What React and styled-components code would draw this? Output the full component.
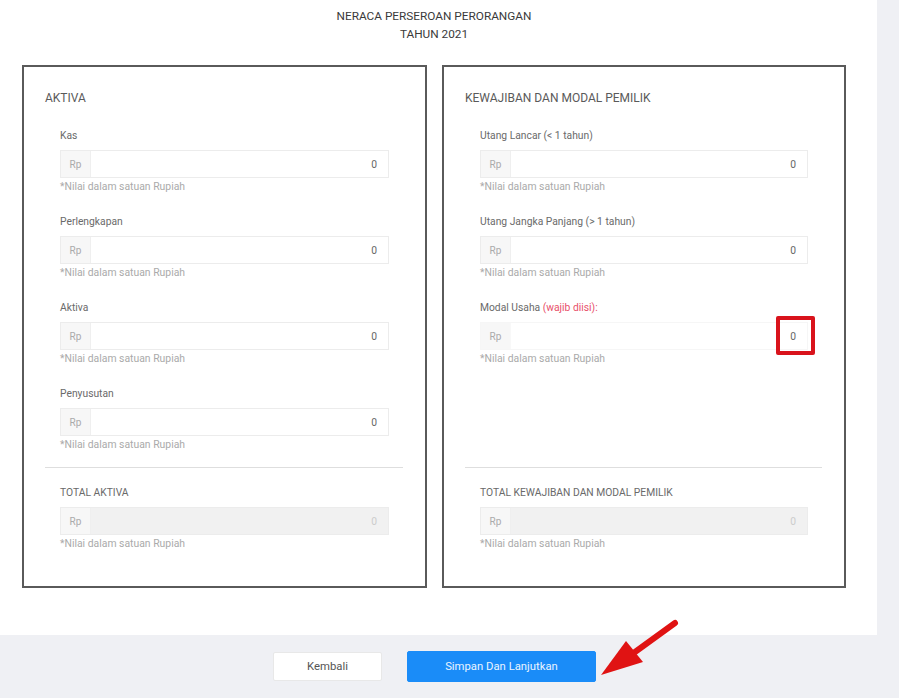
import React from "react";
import styled, { createGlobalStyle } from "styled-components";

const Global = createGlobalStyle`
  html, body { margin: 0; padding: 0; }
  body {
    background: #eff0f4;
    font-family: Roboto, "Liberation Sans", Arial, sans-serif;
    -webkit-font-smoothing: antialiased;
  }
  * { box-sizing: border-box; }
`;

const Page = styled.div`
  position: relative;
  width: 899px;
  height: 698px;
  overflow: hidden;
  background: #eff0f4;
`;

const Sheet = styled.div`
  width: 877px;
  height: 635px;
  background: #fff;
  padding-top: 7px;
`;

const Title = styled.div`
  text-align: center;
  font-size: 11.8px;
  line-height: 18px;
  color: #3a3a3a;
  padding-right: 9px;
`;

const Panels = styled.div`
  display: flex;
  gap: 15px;
  margin-top: 22px;
  padding-left: 22px;
`;

const Panel = styled.section`
  width: ${(p) => p.$w}px;
  height: 523px;
  border: 2px solid #5a5a5a;
  display: flex;
  flex-direction: column;
  padding: 24px 0 35px 21px;
`;

const Heading = styled.h2`
  margin: 0 0 25px;
  font-size: 12px;
  line-height: 14px;
  font-weight: 400;
  color: #5a5a5a;
  text-transform: uppercase;
`;

const Fields = styled.div`
  flex: 1 1 0;
  min-height: 0;
  padding-left: 15px;
`;

const Field = styled.div`
  width: ${(p) => p.$w}px;
  margin-bottom: ${(p) => (p.$last ? 0 : 22)}px;
`;

const Label = styled.div`
  font-size: 10.3px;
  line-height: 12px;
  color: #6a6a6a;
  margin-bottom: 8px;
  white-space: nowrap;
`;

const Required = styled.span`
  color: #e8506a;
`;

const InputGroup = styled.div`
  position: relative;
  display: flex;
  height: 28px;
  border: 1px solid ${(p) => (p.$faint ? "#f6f6f6" : "#ececec")};
  background: ${(p) => (p.$disabled ? "#f1f1f1" : "#fff")};
`;

const Addon = styled.div`
  width: 30px;
  display: flex;
  align-items: center;
  justify-content: center;
  background: #f7f7f7;
  border-right: 1px solid ${(p) => (p.$faint ? "#f8f8f8" : "#efefef")};
  font-size: 10px;
  color: #aaa;
`;

const Value = styled.div`
  flex: 1;
  display: flex;
  align-items: center;
  justify-content: flex-end;
  padding-right: 11px;
  font-size: 10.3px;
  color: ${(p) => (p.$disabled ? "#ccc" : "#666")};
`;

const Helper = styled.div`
  margin-top: 2px;
  font-size: 10.4px;
  line-height: 14px;
  color: #aaa;
  white-space: nowrap;
`;

const Divider = styled.hr`
  margin: 0 22px 19px 0;
  border: 0;
  border-top: 1px solid #dedede;
`;

const Total = styled.div`
  padding-left: 15px;
`;

const Highlight = styled.div`
  position: absolute;
  right: -8px;
  top: -7px;
  width: 39px;
  height: 39px;
  border: 4px solid #d9131c;
  border-radius: 2px;
`;

const Footer = styled.div`
  width: 869px;
  height: 63px;
  display: flex;
  justify-content: center;
  align-items: center;
  gap: 25px;
`;

const Button = styled.button`
  height: ${(p) => (p.$primary ? 31 : 29)}px;
  width: ${(p) => (p.$primary ? 189 : 109)}px;
  border: 1px solid ${(p) => (p.$primary ? "#1a8cf8" : "#e8e8e8")};
  background: ${(p) => (p.$primary ? "#1a8cf8" : "#fff")};
  color: ${(p) => (p.$primary ? "#eaf4ff" : "#555")};
  font-family: Roboto, "Liberation Sans", Arial, sans-serif;
  font-size: 11.3px;
  border-radius: 2px;
  padding: 0;
`;

const Arrow = styled.svg`
  position: absolute;
  left: 590px;
  top: 610px;
`;

function MoneyField({ label, required, w, faint, highlight, last }) {
  return (
    <Field $w={w} $last={last}>
      <Label>
        {label}
        {required && <Required> (wajib diisi):</Required>}
      </Label>
      <InputGroup $faint={faint}>
        <Addon $faint={faint}>Rp</Addon>
        <Value>0</Value>
        {highlight && <Highlight />}
      </InputGroup>
      <Helper>*Nilai dalam satuan Rupiah</Helper>
    </Field>
  );
}

function TotalField({ label, w }) {
  return (
    <Total>
      <Field $w={w} $last>
        <Label>{label}</Label>
        <InputGroup $disabled>
          <Addon>Rp</Addon>
          <Value $disabled>0</Value>
        </InputGroup>
        <Helper>*Nilai dalam satuan Rupiah</Helper>
      </Field>
    </Total>
  );
}

export default function App() {
  return (
    <Page>
      <Global />
      <Sheet>
        <Title>
          NERACA PERSEROAN PERORANGAN
          <br />
          TAHUN 2021
        </Title>
        <Panels>
          <Panel $w={405}>
            <Heading>Aktiva</Heading>
            <Fields>
              <MoneyField w={329} label="Kas" />
              <MoneyField w={329} label="Perlengkapan" />
              <MoneyField w={329} label="Aktiva" />
              <MoneyField w={329} label="Penyusutan" last />
            </Fields>
            <Divider />
            <TotalField w={329} label="TOTAL AKTIVA" />
          </Panel>
          <Panel $w={404}>
            <Heading>Kewajiban dan Modal Pemilik</Heading>
            <Fields>
              <MoneyField w={328} label="Utang Lancar (< 1 tahun)" />
              <MoneyField w={328} label="Utang Jangka Panjang (> 1 tahun)" />
              <MoneyField w={328} label="Modal Usaha" required faint highlight last />
            </Fields>
            <Divider />
            <TotalField w={328} label="TOTAL KEWAJIBAN DAN MODAL PEMILIK" />
          </Panel>
        </Panels>
      </Sheet>
      <Footer>
        <Button>Kembali</Button>
        <Button $primary>Simpan Dan Lanjutkan</Button>
      </Footer>
      <Arrow width="100" height="80" viewBox="0 0 100 80">
        <line x1="85" y1="13" x2="45" y2="42" stroke="#e01313" strokeWidth="6" strokeLinecap="round" />
        <polygon points="11,65 36,31 53,52" fill="#e01313" />
      </Arrow>
    </Page>
  );
}
